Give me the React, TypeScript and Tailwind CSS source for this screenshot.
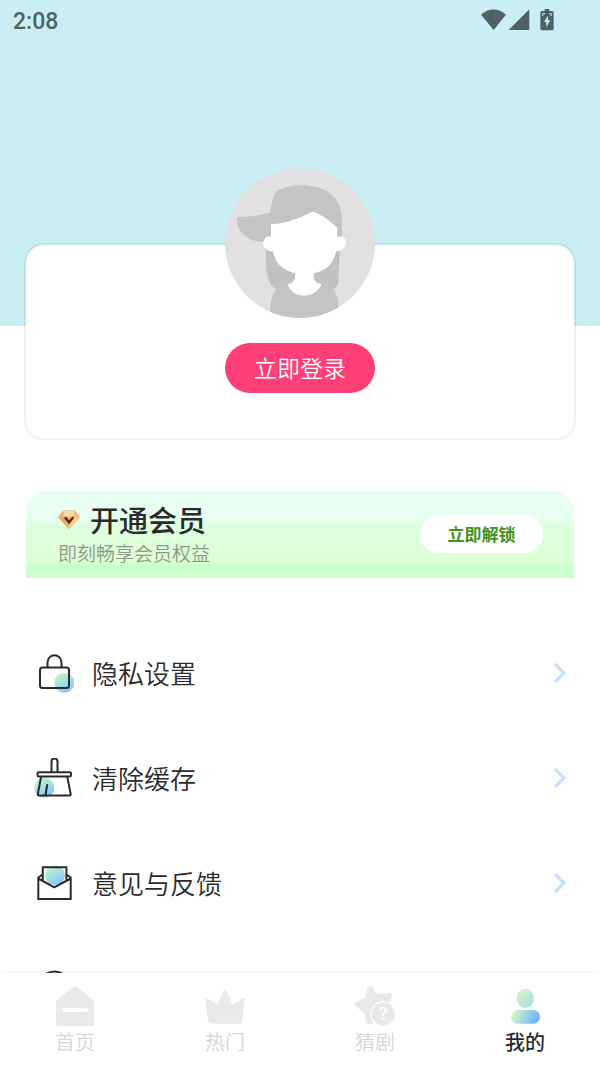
import type { ReactNode } from 'react';

function StatusBar() {
  return (
    <div className="flex h-10 items-center justify-between pr-[46px] pl-[13px] text-[#4f6264]">
      <span className="pt-[3px] font-[Roboto,sans-serif] text-[23px] leading-6 font-medium">2:08</span>
      <div className="flex items-center">
        <svg className="h-[22px] w-[25px]" viewBox="0 0 75 66" fill="currentColor">
          <path d="M0 17C22-4 53-4 75 17L38 63Z" />
        </svg>
        <svg className="ml-[2px] h-[22px] w-[22px]" viewBox="0 0 66 66" fill="currentColor">
          <path d="M64 1V63H2Z" />
        </svg>
        <svg className="ml-[10px] h-[22px] w-[14px]" viewBox="0 0 42 66">
          <path
            d="M14 0H28V6H36Q41 6 41 11V59Q41 64 36 64H6Q1 64 1 59V11Q1 6 6 6H14Z"
            fill="currentColor"
          />
          <path d="M24 20L12 39H19V54L31 34H24Z" fill="#c9eef4" />
          <path d="M8 21V14H15M34 21V14H27" fill="none" stroke="#c9eef4" strokeWidth="3" />
        </svg>
      </div>
    </div>
  );
}

function Avatar() {
  return (
    <svg className="h-[150px] w-[150px]" viewBox="0 0 450 450">
      <defs>
        <clipPath id="avatar-clip">
          <circle cx="225" cy="225" r="225" />
        </clipPath>
      </defs>
      <g clipPath="url(#avatar-clip)">
        <rect width="450" height="450" fill="#e2e0e1" />
        {/* hair */}
        <path
          d="M122 230L340 130L350 170V240L345 250L340 340Q337 362 320 366L152 364C120 345 123 290 122 230Z"
          fill="#c2c0c3"
        />
        {/* shirt */}
        <path d="M135 450C134 405 140 375 158 360H322C337 375 343 405 340 450Z" fill="#c5c3c5" />
        {/* face and neck */}
        <path
          d="M138 162C185 160 220 146 258 130C290 138 315 160 337 178V207C352 200 363 208 363 222C363 239 350 250 333 250C326 288 303 308 266 316C264 334 272 348 290 348C272 393 206 397 187 349C207 346 212 333 210 316C172 305 150 285 144 250C126 250 114 239 114 222C114 207 126 200 138 208Z"
          fill="#fff"
        />
        {/* cap */}
        <path
          d="M136 133C141 105 140 82 160 67C192 48 258 46 298 66C337 84 354 120 350 168L348 206L338 204V178C315 160 290 135 262 131C225 149 190 165 138 169V207C130 201 119 209 115 222C65 220 38 192 36 156Q36 146 46 146C80 145 108 143 136 133Z"
          fill="#c5c3c5"
        />
      </g>
    </svg>
  );
}

function DiamondIcon() {
  return (
    <svg className="h-[22px] w-[22px]" viewBox="0 0 66 66">
      <path
        d="M16 9H50L64 28L33 61L2 28Z"
        fill="#f0b878"
        stroke="#f0b878"
        strokeWidth="4"
        strokeLinejoin="round"
      />
      <path d="M16 8H50L47 25H19Z" fill="#f9d9ae" />
      <path d="M2 28H19L33 62Z" fill="#e8aa68" />
      <path d="M64 28H47L33 62Z" fill="#f7cf9b" />
      <path d="M21 28L33 43L46 28" fill="none" stroke="#4a2c14" strokeWidth="7" />
    </svg>
  );
}

function MenuIcon({ id, cx, cy, children }: { id: string; cx: number; cy: number; children: ReactNode }) {
  return (
    <svg
      className="h-10 w-10 shrink-0"
      viewBox="0 0 40 40"
      fill="none"
      stroke="#2b2b2b"
      strokeWidth="2"
      strokeLinejoin="round"
      strokeLinecap="round"
    >
      <defs>
        <linearGradient id={id} x1="0.2" y1="0" x2="0.8" y2="1">
          <stop offset="0.1" stopColor="#bdf3c6" />
          <stop offset="0.55" stopColor="#9fdbe8" />
          <stop offset="1" stopColor="#86bdfb" />
        </linearGradient>
      </defs>
      <circle cx={cx} cy={cy} r="10" fill={`url(#${id})`} stroke="none" />
      {children}
    </svg>
  );
}

const menuItems = [
  {
    label: '隐私设置',
    icon: (
      <MenuIcon id="lock" cx={30.3} cy={29.7}>
        <rect x="6" y="14.5" width="29" height="20.5" rx="2.5" />
        <path d="M13.5 14V9.5a7 7.3 0 0 1 14 0V14" />
      </MenuIcon>
    ),
  },
  {
    label: '清除缓存',
    icon: (
      <MenuIcon id="broom" cx={10.3} cy={29.7}>
        <path d="M17.5 14V3.5a3 3 0 0 1 6 0V14" />
        <rect x="3.5" y="14.2" width="33.5" height="4.3" rx="1.2" />
        <path d="M7 19L3.8 36.2Q3.6 37.5 5 37.5H35.5Q37 37.5 36.7 36.2L33.3 19M13.2 27L11.5 37" />
      </MenuIcon>
    ),
  },
  {
    label: '意见与反馈',
    icon: (
      <MenuIcon id="mail" cx={21} cy={12.3}>
        <path d="M4.3 15L20.3 24.3L36.7 15V36H4.3Z" fill="#fff" stroke="none" />
        <path
          d="M8.5 11.5L4.3 14.5V36H36.7V14.5L32.5 11.5M4.3 15.5L20.3 24.3L36.7 15.5M8.8 17.7V4.2H32.4V17.7"
          strokeLinejoin="miter"
        />
      </MenuIcon>
    ),
  },
  {
    label: '',
    icon: (
      <MenuIcon id="round" cx={30} cy={30}>
        <circle cx="20.5" cy="19.5" r="16" />
      </MenuIcon>
    ),
  },
];

const navItems = [
  {
    label: '首页',
    active: false,
    icon: (
      <>
        <path
          d="M53 3Q60-3 67 3L113 41Q117 44 117 50V110Q117 120 107 120H13Q3 120 3 110V50Q3 44 7 41Z"
          fill="#e9e9e9"
        />
        <rect x="23" y="67" width="76" height="11" rx="5" fill="#fff" />
      </>
    ),
  },
  {
    label: '热门',
    active: false,
    icon: (
      <path
        d="M3 37L38 60L60 12L82 60L117 37L108 106Q107 111 102 111H18Q13 111 12 106Z"
        fill="#e9e9e9"
        stroke="#e9e9e9"
        strokeWidth="5"
        strokeLinejoin="round"
      />
    ),
  },
  {
    label: '猜剧',
    active: false,
    icon: (
      <>
        <path
          d="M46 11L59 34L102 30L82 60L80 94L41 107L37 76L9 55L38 41Z"
          fill="#e9e9e9"
          stroke="#e9e9e9"
          strokeWidth="18"
          strokeLinejoin="round"
        />
        <circle cx="85" cy="84" r="37" fill="#e9e9e9" stroke="#fff" strokeWidth="4" />
        <text x="85" y="102" textAnchor="middle" fontSize="52" fontWeight="600" fontFamily="Inter, sans-serif" fill="#fff">
          ?
        </text>
      </>
    ),
  },
  {
    label: '我的',
    active: true,
    icon: (
      <>
        <defs>
          <linearGradient id="user-head" x1="0.1" y1="0" x2="0.9" y2="1">
            <stop offset="0" stopColor="#d5f8c4" />
            <stop offset="1" stopColor="#a8dde2" />
          </linearGradient>
          <linearGradient id="user-body" x1="0" y1="0" x2="1" y2="0.2">
            <stop offset="0.1" stopColor="#d5fac2" />
            <stop offset="0.5" stopColor="#a4dbe0" />
            <stop offset="1" stopColor="#75b2ff" />
          </linearGradient>
        </defs>
        <ellipse cx="61" cy="37" rx="26" ry="29" fill="url(#user-head)" />
        <rect x="18" y="72" width="87" height="41" rx="20" fill="url(#user-body)" />
      </>
    ),
  },
];

export default function App() {
  return (
    <div className="flex h-screen flex-col bg-white font-['Noto_Sans_CJK_SC',sans-serif] text-[#2b2b2b]">
      <main className="min-h-0 flex-1 overflow-hidden">
        <header className="h-[326px] bg-[#c9eef4]">
          <StatusBar />
        </header>

        {/* Login card */}
        <section className="mx-[26px] -mt-[81px] flex flex-col items-center rounded-[18px] bg-white pb-[45px] shadow-[0_0_0_2px_rgba(0,0,0,0.05)]">
          <div className="-mt-[77px]">
            <Avatar />
          </div>
          <button className="mt-[25px] h-[50px] w-[150px] rounded-full bg-[#ff3f78] pb-[2px] text-[23px] leading-8 font-[350] text-white">
            立即登录
          </button>
        </section>

        {/* Membership banner */}
        <section className="mx-[26px] mt-[52px] flex items-center justify-between rounded-t-[24px] bg-[linear-gradient(#e7fef1_0%,#e7fef0_30%,#deffdf_42%,#dcffd7_80%,#c8ffcc_87%,#ceffd3_100%)] pr-[31px] pl-8">
          <div className="h-[88px] pt-[11px]">
            <div className="flex items-center gap-[10px]">
              <DiamondIcon />
              <h2 className="text-[29px] leading-9 font-medium">开通会员</h2>
            </div>
            <p className="text-[19px] leading-8 font-[350] text-[#8f9688]">即刻畅享会员权益</p>
          </div>
          <button className="h-[38px] w-[123px] rounded-full bg-white text-[17px] leading-6 font-bold text-[#42911f]">
            立即解锁
          </button>
        </section>

        <ul className="mt-[42px]">
          {menuItems.map((item, i) => (
            <li key={i}>
              <button className="flex h-[105px] w-full items-center pr-[33px] pl-[34px] text-left">
                {item.icon}
                <span className="ml-[18px] flex-1 text-[26px] leading-9 font-[350]">{item.label}</span>
                <svg className="h-6 w-[15px]" viewBox="0 0 15 24" fill="none" stroke="#c8e0fc" strokeWidth="3.3">
                  <path d="M3 3L12 12L3 21" />
                </svg>
              </button>
            </li>
          ))}
        </ul>
      </main>

      <nav className="relative grid h-[93px] shrink-0 grid-cols-4 bg-white shadow-[0_-1px_3px_rgba(0,0,0,0.06)]">
        {navItems.map((item) => (
          <a key={item.label} href="#" className="flex flex-col items-center pt-[13px]">
            <svg className="h-10 w-10" viewBox="0 0 120 120">
              {item.icon}
            </svg>
            <span
              className={
                item.active
                  ? 'text-[20px] leading-8 font-medium text-[#2b2b2b]'
                  : 'text-[20px] leading-8 font-[350] text-[#d6d6d6]'
              }
            >
              {item.label}
            </span>
          </a>
        ))}
      </nav>
    </div>
  );
}
